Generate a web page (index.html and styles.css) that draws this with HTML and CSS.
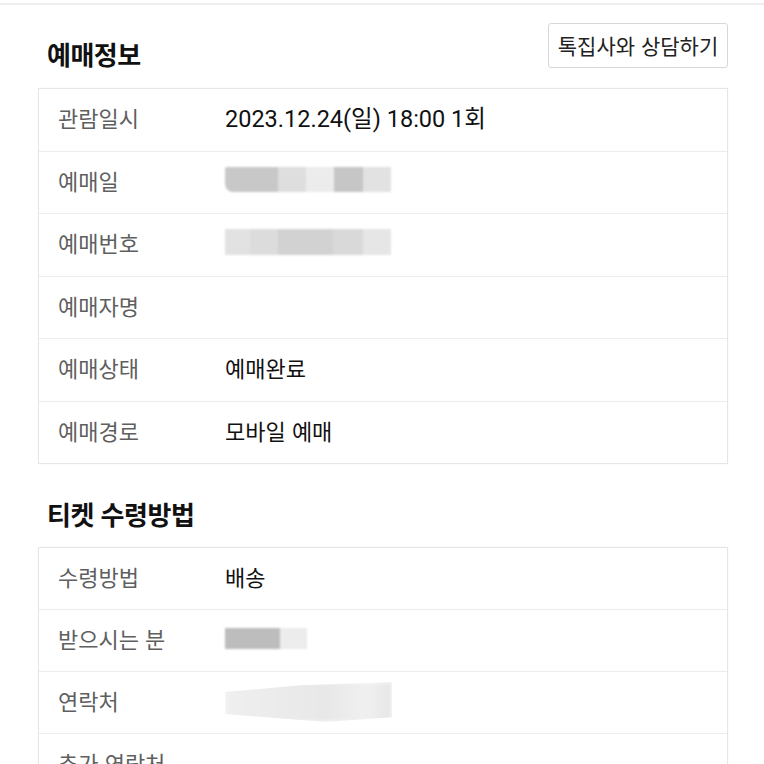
FILE: index.html
```html
<!DOCTYPE html>
<html lang="ko">
<head>
  <meta charset="UTF-8">
  <meta name="viewport" content="width=device-width, initial-scale=1.0">
  <title>예매정보</title>
  <link rel="stylesheet" href="styles.css">
</head>
<body>

  <div class="top-bar"></div>

  <div class="page">
    <!-- 예매정보 -->
    <div class="section-head">
      <h2>예매정보</h2>
      <button class="talk-btn">톡집사와 상담하기</button>
    </div>

    <div class="info-table">
      <div class="row">
        <span class="label">관람일시</span>
        <span class="value num">2023.12.24(일) 18:00 1회</span>
      </div>
      <div class="row">
        <span class="label">예매일</span>
        <span class="blur blur-date"><i></i><i></i><i></i><i></i><i></i></span>
      </div>
      <div class="row">
        <span class="label">예매번호</span>
        <span class="blur blur-number"><i></i><i></i><i></i><i></i><i></i></span>
      </div>
      <div class="row">
        <span class="label">예매자명</span>
        <span class="value"></span>
      </div>
      <div class="row">
        <span class="label">예매상태</span>
        <span class="value">예매완료</span>
      </div>
      <div class="row">
        <span class="label">예매경로</span>
        <span class="value">모바일 예매</span>
      </div>
    </div>

    <!-- 티켓 수령방법 -->
    <div class="section-head second">
      <h2>티켓 수령방법</h2>
    </div>

    <div class="info-table">
      <div class="row tall">
        <span class="label">수령방법</span>
        <span class="value">배송</span>
      </div>
      <div class="row tall">
        <span class="label">받으시는 분</span>
        <span class="blur blur-name"><i></i><i></i></span>
      </div>
      <div class="row tall">
        <span class="label">연락처</span>
        <span class="blur blur-phone"></span>
      </div>
      <div class="row tall">
        <span class="label">추가 연락처</span>
        <span class="value"></span>
      </div>
    </div>
  </div>

</body>
</html>
```

FILE: styles.css
```css
/* Basic Styling */
body {
  margin: 0;
  background-color: #fff;
  font-family: "Noto Sans CJK KR", sans-serif;
  color: #111;
}

.top-bar {
  height: 3px;
  border-bottom: 2px solid #eee;
}

.page {
  padding: 0 36px 0 38px;
}

.section-head {
  display: flex;
  justify-content: space-between;
  align-items: center;
  height: 45px;
  margin-top: 18px;
  margin-bottom: 20px;
}

.section-head.second {
  margin-top: 27px;
  margin-bottom: 11px;
}

.section-head h2 {
  margin: 16px 0 0 9px;
  font-size: 26px;
  font-weight: 700;
  color: #111;
  letter-spacing: -0.5px;
}

.section-head.second h2 {
  margin-top: 0;
}

.talk-btn {
  height: 45px;
  width: 180px;
  background-color: #fff;
  border: 1px solid #d8d8d8;
  border-radius: 3px;
  font-family: "Noto Sans CJK KR", sans-serif;
  font-size: 21px;
  color: #222;
  padding: 0 0 2px;
}

.info-table {
  border: 1px solid #e6e6e6;
  box-shadow: 0 0 2px rgba(0, 0, 0, 0.04);
}

.row {
  display: flex;
  align-items: center;
  box-sizing: border-box;
  height: 62.5px;
  padding: 0 0 5px 19px;
  border-top: 1px solid #ececec;
}

.row:first-child {
  border-top: none;
  height: 61.5px;
}

.row.tall {
  height: 62px;
}

.row.tall:first-child {
  height: 61px;
}

.label {
  width: 167px;
  flex-shrink: 0;
  font-size: 22px;
  color: #5f5f5f;
}

.value {
  font-size: 22px;
  color: #111;
}

.value.num {
  font-family: Roboto, "Noto Sans CJK KR", sans-serif;
  font-size: 23.5px;
}

/* redacted values */
.blur {
  display: flex;
  height: 25px;
  filter: blur(1px);
}

.blur i {
  display: block;
  height: 100%;
}

.blur-date i:nth-child(1) { width: 53px; background: #c8c8c8; border-radius: 2px 0 0 8px; }
.blur-date i:nth-child(2) { width: 28px; background: #dedede; }
.blur-date i:nth-child(3) { width: 28px; background: #ececec; }
.blur-date i:nth-child(4) { width: 29px; background: #c6c6c6; }
.blur-date i:nth-child(5) { width: 28px; background: #e2e2e2; }

.blur-number {
  height: 26px;
}
.blur-number i:nth-child(1) { width: 25px; background: #e2e2e2; }
.blur-number i:nth-child(2) { width: 28px; background: #dcdcdc; }
.blur-number i:nth-child(3) { width: 55px; background: #d2d2d2; }
.blur-number i:nth-child(4) { width: 30px; background: #d9d9d9; }
.blur-number i:nth-child(5) { width: 28px; background: #e6e6e6; }

.blur-name {
  height: 21px;
}
.blur-name i:nth-child(1) { width: 55px; background: #bdbdbd; }
.blur-name i:nth-child(2) { width: 27px; background: #ececec; }

.blur-phone {
  width: 167px;
  height: 40px;
  margin-top: 4px;
  background: linear-gradient(to right, #efefef, #e8e8e8 60%, #f0f0f0 85%, #e6e6e6);
  clip-path: polygon(0 25%, 45% 8%, 100% 0, 100% 88%, 60% 100%, 0 80%);
  filter: blur(2px);
}
```
